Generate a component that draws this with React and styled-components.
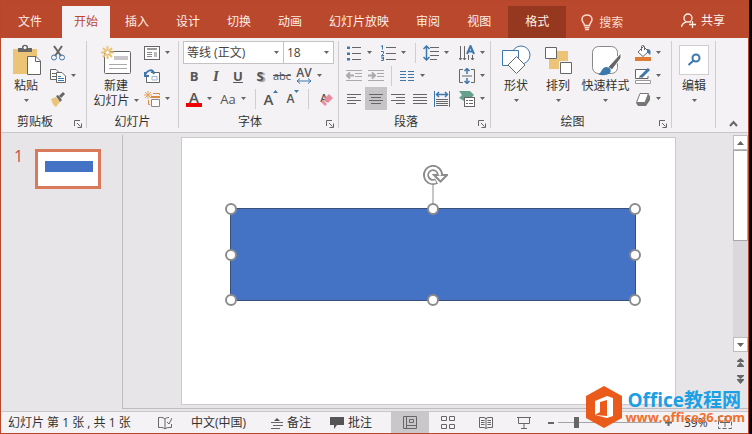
import React, { useState } from 'react';
import styled, { createGlobalStyle } from 'styled-components';

const GlobalStyle = createGlobalStyle`
  * {
    box-sizing: border-box;
  }

  body {
    margin: 0;
    background: #000;
    color: #333;
    font-family: "Open Sans", "Noto Sans CJK SC", sans-serif;
    font-size: 12px;
  }

  button, input, select {
    margin: 0;
    padding: 0;
    border: 0;
    background: none;
    color: inherit;
    font: inherit;
  }

  svg {
    display: block;
    flex: none;
  }
`;

const Window = styled.div`
  display: flex;
  flex-direction: column;
  min-height: 100vh;
  margin-right: 3px;
  border: 1px solid #b7472a;
  background: #e7e5e7;
`;

const TabBar = styled.header`
  display: flex;
  align-items: stretch;
  height: 37px;
  padding-top: 5px;
  background: #b9482d;
  color: #fff;
`;

const TabList = styled.nav`
  display: flex;
  gap: 3px;
`;

const Tab = styled.button`
  padding: 0 12px 2px;
  background: ${props => (props.$active ? '#f4f2f4' : 'transparent')};
  color: ${props => (props.$active ? '#b9482d' : '#fdeee6')};
  white-space: nowrap;
`;

const FileTab = styled(Tab)`
  padding: 0 20px 2px 17px;
`;

const ContextTab = styled(Tab)`
  margin-left: 5px;
  padding: 0 17px 2px;
  background: #963820;
`;

const Search = styled.label`
  display: flex;
  flex: 1;
  align-items: center;
  gap: 6px;
  min-width: 0;
  padding-left: 15px;
  color: #fbdccb;

  input {
    width: 60px;
    outline: 0;
  }

  input::placeholder {
    color: #fbdccb;
    opacity: 1;
  }
`;

const Share = styled.button`
  display: flex;
  align-items: center;
  gap: 5px;
  padding: 0 23px 4px 0;
  color: #fdeee6;
`;

const Ribbon = styled.section`
  display: flex;
  height: 95px;
  padding: 3px 0 4px;
  border-bottom: 1px solid #c9c7c9;
  background: #f4f2f4;
`;

const Group = styled.div`
  display: flex;
  flex: none;
  flex-direction: column;
  width: ${props => props.$width}px;
  border-right: 1px solid #cfcdcf;
`;

const GroupBody = styled.div`
  display: flex;
  height: 69px;
  padding-left: 4px;
`;

const GroupFooter = styled.div`
  display: flex;
  flex: 1;
  align-items: flex-end;
  line-height: 12px;

  span {
    flex: 1;
    text-align: center;
  }
`;

const Launcher = styled.button`
  padding: 0 4px 0 5px;
`;

const Column = styled.div`
  display: flex;
  flex: ${props => (props.$grow ? 1 : 'none')};
  flex-direction: column;
`;

const Row = styled.div`
  display: flex;
  align-items: center;
  height: 23px;
`;

const Tool = styled.button`
  display: flex;
  flex: none;
  flex-direction: column;
  align-items: center;
  justify-content: center;
  width: 22px;
  height: 23px;
  background: ${props => (props.$active ? '#c6c4c6' : 'transparent')};
  color: #555;
`;

const Glyph = styled.span`
  font-size: ${props => props.$size || 13}px;
  font-weight: ${props => props.$weight || 400};
  line-height: ${props => props.$line || 18}px;
`;

const ItalicGlyph = styled(Glyph)`
  font-family: "Liberation Serif", serif;
  font-style: italic;
`;

const UnderlineGlyph = styled(Glyph)`
  text-decoration: underline;
`;

const ShadowGlyph = styled(Glyph)`
  text-shadow: 2px 1px 1px #999;
`;

const StrikeGlyph = styled(Glyph)`
  text-decoration: line-through;
`;

const StepGlyph = styled.span`
  display: flex;
  align-items: flex-start;
`;

const EraserGlyph = styled.span`
  display: grid;
  width: 18px;

  > * {
    grid-area: 1 / 1;
  }

  svg {
    align-self: end;
    justify-self: end;
  }
`;

const ColorBar = styled.span`
  width: 16px;
  height: 4px;
  background: #f00000;
`;

const DropButton = styled.button`
  display: flex;
  flex: none;
  align-items: center;
  width: 12px;
  height: 23px;
  padding-left: 2px;
`;

const Separator = styled.span`
  width: 1px;
  height: 20px;
  margin: 0 4px;
  background: #cfcdcf;
`;

const Spacer = styled.span`
  flex: 1;
`;

const BigButton = styled.button`
  display: flex;
  flex: none;
  flex-direction: column;
  align-items: center;
  width: ${props => props.$width}px;
  line-height: 16px;
  white-space: nowrap;
`;

const BigIcon = styled.span`
  display: flex;
  align-items: center;
  justify-content: center;
  height: 37px;
`;

const BigLine = styled.span`
  display: flex;
  align-items: center;
  gap: 4px;
  height: 15px;
`;

const FindBox = styled.span`
  display: flex;
  align-items: center;
  justify-content: center;
  width: 30px;
  height: 30px;
  border: 1px solid #cfcdcf;
  background: #fff;
`;

const SelectBox = styled.span`
  display: grid;
  align-items: center;
  width: ${props => props.$width}px;
  height: 23px;
  border: 1px solid #c4c2c4;
  border-left-width: ${props => (props.$joined ? 0 : 1)}px;
  background: #fff;

  select, svg {
    grid-area: 1 / 1;
  }

  select {
    appearance: none;
    padding-left: 3px;
    color: #444;
  }

  svg {
    margin-right: 4px;
    justify-self: end;
    pointer-events: none;
  }
`;

const Collapse = styled.button`
  align-self: flex-end;
  margin-left: auto;
  padding: 0 10px 0 0;
`;

const Workspace = styled.main`
  display: flex;
  flex: 1;
  padding-top: 2px;
`;

const Thumbnails = styled.aside`
  display: flex;
  align-items: flex-start;
  width: 122px;
  padding: 14px 0 0 13px;
  border-right: 1px solid #bebcbe;
`;

const ThumbNumber = styled.span`
  width: 21px;
  color: #c6504a;
  font-size: 16px;
  line-height: 14px;
`;

const Thumb = styled.button`
  display: flex;
  width: 66px;
  height: 40px;
  padding: 9px 5px 0 7px;
  border: 3px solid #d97a5b;
  background: #fff;

  span {
    flex: 1;
    height: 11px;
    background: #4472c4;
  }
`;

const Canvas = styled.section`
  display: flex;
  flex: 1;
  justify-content: center;
  padding: 2px 57px 3px 58px;
  border-bottom: 1px solid #bebcbe;
`;

const Slide = styled.div`
  flex: 1;
  padding: 70px 39px 0 48px;
  border: 1px solid #cbc9cb;
  background: #fff;
`;

const SelectedShape = styled.div`
  position: relative;
  height: 93px;
  border: 1px solid #3a5078;
  background: #4472c4;
`;

const Handle = styled.span`
  position: absolute;
  top: ${props => props.$y}%;
  left: ${props => props.$x}%;
  width: 12px;
  height: 12px;
  border: 2px solid #8c8c8c;
  border-radius: 50%;
  background: #fff;
  transform: translate(-50%, -50%);
`;

const RotateHandle = styled.span`
  position: absolute;
  bottom: 100%;
  left: 50%;
  transform: translateX(-50%);
`;

const ScrollBar = styled.div`
  display: flex;
  flex-direction: column;
  width: 15px;
  border-bottom: 1px solid #bebcbe;
`;

const ScrollButton = styled.button`
  display: flex;
  align-items: center;
  justify-content: center;
  height: 15px;
  border: 1px solid #bebcbe;
  background: #fff;
`;

const ScrollTrack = styled.div`
  flex: 1;
  background: #dad8da;
`;

const ScrollThumb = styled.div`
  height: 91px;
  border: 1px solid #a9a7a9;
  background: #fff;
`;

const PageButton = styled.button`
  display: flex;
  align-items: center;
  justify-content: center;
  height: 17px;
`;

const ScrollEnd = styled.div`
  display: flex;
  flex-direction: column;
  height: 56px;
  padding-top: 2px;
`;

const StatusBar = styled.footer`
  position: relative;
  display: flex;
  align-items: center;
  height: 22px;
  margin-top: 2px;
  padding: 0 16px 0 7px;
  border-top: 1px solid #c9c7c9;
  background: #f4f2f4;
  line-height: 16px;
  white-space: nowrap;
`;

const StatusText = styled.span`
  width: 150px;
`;

const StatusButton = styled.button`
  display: flex;
  align-items: center;
  gap: 4px;
  margin-right: 19px;
`;

const ViewButton = styled.button`
  display: flex;
  align-items: center;
  justify-content: center;
  width: 38px;
  height: 21px;
  background: ${props => (props.$active ? '#c9c7c9' : 'transparent')};
`;

const Zoom = styled.div`
  display: flex;
  flex: none;
  align-items: center;
  gap: 4px;
  margin-left: 5px;
`;

const ZoomSlider = styled.input`
  width: 103px;
  height: 13px;
  appearance: none;

  &::-webkit-slider-runnable-track {
    height: 1px;
    background: #a5a3a5;
  }

  &::-webkit-slider-thumb {
    width: 5px;
    height: 11px;
    margin-top: -5px;
    appearance: none;
    background: #666;
  }
`;

const ZoomValue = styled.span`
  width: 38px;
  padding-left: 8px;
`;

const Watermark = styled.div`
  position: absolute;
  right: 3px;
  bottom: 5px;
  display: flex;
  align-items: center;
  gap: 3px;
  pointer-events: none;
`;

const WatermarkText = styled.div`
  color: #f0702c;
  font-size: 13px;
  font-weight: 700;
  line-height: 14px;

  strong {
    display: block;
    padding-left: 2px;
    color: #1ba0e4;
    font-size: 19px;
    font-weight: 700;
    line-height: 20px;
  }
`;

const Svg = ({ w = 16, h = 16, children, ...rest }) => (
  <svg width={w} height={h} viewBox={`0 0 ${w} ${h}`} fill="none" stroke="#666" aria-hidden="true" {...rest}>
    {children}
  </svg>
);

const Caret = () => (
  <Svg w={5} h={3} stroke="none" fill="#666"><path d="M0 0H5L2.5 3Z" /></Svg>
);

const Drop = ({ label }) => (
  <DropButton aria-label={label}><Caret /></DropButton>
);

const Paste = () => (
  <Svg w={30} h={32}>
    <path d="M2 5H26V30H2Z" fill="#ecc477" stroke="none" />
    <path d="M7 8V4H11V3C11 0 17 0 17 3V4H21V8Z" fill="#666" stroke="none" />
    <circle cx="14" cy="3.5" r="1.5" fill="#fff" stroke="none" />
    <path d="M16.5 12.5H25L29.5 17V30.5H16.5Z" fill="#fff" />
    <path d="M24.5 12.5V17.5H29.5" />
  </Svg>
);

const Cut = () => (
  <Svg>
    <path d="M4 1L11 11M12 1L5 11" strokeWidth="2" />
    <circle cx="4" cy="12.5" r="2.5" stroke="#3d78ad" />
    <circle cx="12" cy="12.5" r="2.5" stroke="#3d78ad" />
  </Svg>
);

const Copy = () => (
  <Svg>
    <path d="M.5 1.500H6L8.500 4V11.500H.5ZM2 5.500H6M2 8.500H6" fill="#fff" />
    <path d="M6.500 4.500H12L15.500 8V14.500H6.500Z" fill="#fff" />
    <path d="M8 8.500H11M8 10.500H14M8 12.500H14" stroke="#3d78ad" />
  </Svg>
);

const Brush = () => (
  <Svg>
    <path d="M1 8L6 6L10 11L6 16C4 15 2 12 1 8Z" fill="#ecc477" stroke="none" />
    <path d="M6 5L8 4L12 9L10 11Z" fill="#666" stroke="none" />
    <path d="M10 6L14 2" strokeWidth="3" />
  </Svg>
);

const NewSlide = () => (
  <Svg w={30} h={28}>
    <rect x="3.500" y="5.500" width="26" height="22" rx="1" fill="#fff" />
    <path d="M13 10H27V14H13Z" fill="#c8c6c8" stroke="none" />
    <path d="M8 18.500H26M8 22.500H26" stroke="#aaa" />
    <path d="M6.500 0V13M0 6.500H13M2 2L11 11M11 2L2 11" stroke="#ecc477" strokeWidth="2" />
    <circle cx="6.500" cy="6.500" r="2" fill="#fff" stroke="#ecc477" />
  </Svg>
);

const Layout = () => (
  <Svg>
    <rect x=".5" y="1.500" width="15" height="13" fill="#fff" />
    <path d="M3 4H13" stroke="#999" strokeWidth="2" />
    <path d="M3 7.500H8M3 9.500H8M3 11.500H8" stroke="#888" />
    <path d="M10 7H13V12H10Z" fill="#bbb" stroke="none" />
  </Svg>
);

const Reset = () => (
  <Svg>
    <path d="M7 4.500H15.500V14.500H2.500V9" fill="#fff" />
    <path d="M8 8.500H13V12H8Z" stroke="#9bb5cc" />
    <path d="M1 4V8H5M1 7C4 1 9 1 10 6" stroke="#3d78ad" strokeWidth="2" />
  </Svg>
);

const Section = () => (
  <Svg>
    <path d="M4 0V8M0 4H8M1 1L7 7M7 1L1 7" stroke="#e3a35f" />
    <path d="M9 2.500H15.500V4M6 13.500H4.500V9" stroke="#d88b42" />
    <path d="M7.500 8.500H15.500V15.500H7.500Z" fill="#fff" stroke="#888" />
    <path d="M7 6H16" stroke="#d88b42" strokeWidth="2" />
  </Svg>
);

const SpacingArrow = () => (
  <Svg w={16} h={6} stroke="#3d78ad"><path d="M1 3H15M4 .5L1 3L4 5.500M12 .5L15 3L12 5.500" /></Svg>
);

const SizeGlyph = ({ down }) => (
  <StepGlyph>
    <Glyph $size={down ? 12 : 15} $weight={600}>A</Glyph>
    <Svg w={5} h={3} stroke="none" fill="#3d78ad"><path d={down ? 'M0 0H5L2.500 3Z' : 'M0 3H5L2.500 0Z'} /></Svg>
  </StepGlyph>
);

const ClearFormat = () => (
  <EraserGlyph>
    <Glyph $size={11} $weight={600} $line={12}>A</Glyph>
    <Svg w={13} h={14} stroke="none" fill="#e98ba3">
      <path d="M4 7L9 2L13 6L8 11Z" />
      <path d="M3 8L7 12L5 14L1 10Z" />
    </Svg>
  </EraserGlyph>
);

const Bullets = () => (
  <Svg>
    <path d="M6 2.500H15M6 8.500H15M6 14.500H15" />
    <path d="M1 1.500H4V4H1ZM1 7.500H4V10H1ZM1 13H4V15.500H1Z" fill="#3d78ad" stroke="none" />
  </Svg>
);

const Numbers = () => (
  <Svg>
    <path d="M6 2.500H16M6 8.500H16M6 14.500H16" />
    <path d="M1 1.500L2.500 .5V4.500M1 6.500H3.500V8.500L1.500 10.500H4M1 12H3.500V15.500H1M1.500 13.500H3.500" stroke="#3d78ad" />
  </Svg>
);

const Indent = ({ flip }) => (
  <Svg stroke="#aaa">
    <path d="M0 2.500H16M9 5.500H16M9 8.500H16M0 12.500H16" />
    <path d={flip ? 'M0 7.500H7M4 4.500L7 7.500L4 10.500' : 'M8 7.500H1M4 4.500L1 7.500L4 10.500'} strokeWidth="2" />
  </Svg>
);

const LineSpacing = () => (
  <Svg>
    <path d="M7 2.500H16M7 6.500H16M7 10.500H16M7 14.500H14" />
    <path d="M3.500 1V15M.5 4L3.500 1L6.500 4M.5 12L3.500 15L6.500 12" stroke="#3d78ad" strokeWidth="1.500" />
  </Svg>
);

const TextDirection = () => (
  <Svg>
    <path d="M1.500 1V15M5.500 1V15M9.500 10V15M13.500 10V15M0 13L1.500 15L3 13M4 13L5.500 15L7 13M12 13L13.500 15L15 13" />
    <path d="M8 9L11.500 1L15 9M9 6.500H14" stroke="#3d78ad" strokeWidth="2" />
  </Svg>
);

const Columns = () => (
  <Svg stroke="#3d78ad">
    <path d="M1 3.500H7M1 6.500H7M1 9.500H7M1 12.500H7M9 3.500H15M9 6.500H15M9 9.500H15M9 12.500H15" />
  </Svg>
);

const AlignText = () => (
  <Svg>
    <path d="M4 1.500H.5V14.500H4M12 1.500H15.500V14.500H12M3 8H13" />
    <path d="M8 0V6M5.500 3L8 .5L10.500 3M8 10V16M5.500 13L8 15.500L10.500 13" stroke="#3d78ad" strokeWidth="1.500" />
  </Svg>
);

const alignPaths = {
  left: 'M1 3.500H15M1 6.500H10M1 9.500H15M1 12.500H10',
  center: 'M1 3.500H15M3 6.500H13M1 9.500H15M3 12.500H13',
  right: 'M1 3.500H15M6 6.500H15M1 9.500H15M6 12.500H15',
  justify: 'M1 3.500H15M1 6.500H15M1 9.500H15M1 12.500H15',
};

const Align = ({ kind }) => <Svg><path d={alignPaths[kind]} /></Svg>;

const Distribute = () => (
  <Svg>
    <path d="M.5 0V16M15.500 0V16" stroke="#3d78ad" />
    <path d="M3 3.500H13M5 1L2.500 3.500L5 6M11 1L13.500 3.500L11 6" stroke="#3d78ad" strokeWidth="1.500" />
    <path d="M2 8.500H14M2 10.500H14M2 12.500H14M2 14.500H14" />
  </Svg>
);

const SmartArt = () => (
  <Svg>
    <path d="M0 0H11L15 4L12 7H5V10L0 7L3 4Z" fill="#64a08a" stroke="none" />
    <rect x="5.500" y="6.500" width="10" height="9" fill="#fff" />
    <path d="M7 9.500H9M10 9.500H14M7 12.500H9M10 12.500H14" />
  </Svg>
);

const Shapes = () => (
  <Svg w={30} h={30} stroke="#3d78ad">
    <circle cx="20" cy="10" r="9" fill="#fff" />
    <path d="M1.500 5.500H17.500V20.500H1.500Z" fill="#fff" strokeWidth="1" />
    <path d="M15.500 11.500L24 20L15.500 28.500L7 20Z" fill="#fff" stroke="#666" />
  </Svg>
);

const Arrange = () => (
  <Svg w={28} h={28}>
    <path d="M13 5H24V15H13ZM5 13H15V23H5Z" fill="#ecc477" stroke="none" />
    <path d="M1.500 1.500H12.500V12.500H1.500ZM16.500 16.500H27.500V27.500H16.500Z" fill="#fff" />
  </Svg>
);

const QuickStyle = () => (
  <Svg w={32} h={32}>
    <rect x="2.500" y="2.500" width="25" height="27" rx="6" fill="#fff" stroke="#888" />
    <path d="M31 9V14L22 26L18 23Z" fill="#666" stroke="#fff" />
    <path d="M8 31C11 30 11 24 16 23C20 23 22 26 20 29C17 32 12 31 8 31Z" fill="#3d78ad" stroke="none" />
  </Svg>
);

const Fill = () => (
  <Svg>
    <path d="M3 7L8.500 1.500L13.500 6.500L8 11.500Z" fill="#fff" />
    <path d="M6.500 6V1.500C6.500 0 9.500 0 9.500 2V5" />
    <path d="M12 4C16 4 16 7 15 10L12 7Z" fill="#3d78ad" stroke="none" />
    <path d="M0 12H16V16H0Z" fill="#e07b36" stroke="none" />
  </Svg>
);

const Outline = () => (
  <Svg>
    <path d="M12 1.500H.5V10.500H13V8" fill="#fff" />
    <path d="M6 9L14 1" stroke="#3d78ad" strokeWidth="3" />
    <path d="M4 10L5 7L7 9Z" fill="#666" stroke="none" />
    <path d="M.5 12.500H15.500V15.500H.5Z" fill="#fff" stroke="#999" />
  </Svg>
);

const Effects = () => (
  <Svg>
    <path d="M1 12L3 15H11L15 9V5L13 3Z" fill="#777" stroke="none" />
    <path d="M5 2.500H13.500L10 11.500H1.500Z" fill="#fff" stroke="#777" strokeLinejoin="round" />
  </Svg>
);

const FindIcon = () => (
  <Svg w={14} h={14} stroke="#3d78ad">
    <circle cx="9" cy="5" r="3.500" strokeWidth="2" />
    <path d="M6.500 7.500L1.500 12" strokeWidth="2" />
  </Svg>
);

const LauncherIcon = () => (
  <Svg w={8} h={8}>
    <path d="M.5 6V.5H6M3 3L6.500 6.500M7.500 3.500V7.500H3.500" />
  </Svg>
);

const Bulb = () => (
  <Svg w={12} h={17} stroke="#fbdccb" strokeWidth="1.500">
    <path d="M3.500 11.500C3.500 9 1 8.500 1 5.500C1 -.5 11 -.5 11 5.500C11 8.500 8.500 9 8.500 11.500Z" />
    <path d="M3.500 13.500H8.500M4 15.500H8" />
  </Svg>
);

const Person = () => (
  <Svg w={15} h={15} stroke="#fdeee6" strokeWidth="1.300">
    <circle cx="7" cy="5" r="4" />
    <path d="M.5 14C1 11 3 9.500 5.500 9M8.500 9L10 9.500M8 11.500H15M11.500 8V15" />
  </Svg>
);

const PageArrows = ({ down }) => (
  <Svg w={7} h={9} stroke="none" fill="#666">
    <path d={down ? 'M0 0H7V1L3.500 4L0 1ZM0 4H7V5L3.500 9L0 5Z' : 'M0 4H7V3L3.500 0L0 3ZM0 9H7V8L3.500 4L0 8Z'} />
  </Svg>
);

const Rotate = () => (
  <Svg w={30} h={44} stroke="#8c8c8c">
    <path d="M15 19V44" />
    <path d="M18.500 16A7 7 0 1 1 22 9.500" strokeWidth="6" />
    <path d="M16 10H29L22.500 16.500Z" fill="#fff" strokeWidth="2" />
    <path d="M17.700 16.500A7 7 0 1 1 22 10.500" stroke="#fff" strokeWidth="2.500" />
    <path d="M19 11H26L22.500 14.500Z" fill="#fff" stroke="none" />
  </Svg>
);

const OfficeLogo = () => (
  <Svg w={36} h={42} stroke="none">
    <path d="M18 0L36 10V32L18 42L0 32V10Z" fill="#ea5b1b" />
    <path d="M9 15L21 10L27 12V30L21 32L9 29L21 30V14L14 16V26L9 29Z" fill="#fff" />
  </Svg>
);

const RibbonGroup = ({ title, width, launcher, children }) => (
  <Group $width={width}>
    <GroupBody>{children}</GroupBody>
    <GroupFooter>
      <span>{title}</span>
      {launcher && <Launcher aria-label={title}><LauncherIcon /></Launcher>}
    </GroupFooter>
  </Group>
);

const Big = ({ icon, text, width }) => (
  <BigButton $width={width}>
    <BigIcon>{icon}</BigIcon>
    <BigLine>{text}</BigLine>
    <BigLine><Caret /></BigLine>
  </BigButton>
);

const tabs = ['开始', '插入', '设计', '切换', '动画', '幻灯片放映', '审阅', '视图'];

const handles = [
  [0, 0], [50, 0], [100, 0],
  [0, 50], [100, 50],
  [0, 100], [50, 100], [100, 100],
];

const App = () => {
  const [activeTab, setActiveTab] = useState('开始');
  const [zoom, setZoom] = useState(39);

  return (
    <>
      <GlobalStyle />
      <Window>
        <TabBar>
          <FileTab>文件</FileTab>
          <TabList>
            {tabs.map(tab => (
              <Tab key={tab} $active={tab === activeTab} onClick={() => setActiveTab(tab)}>{tab}</Tab>
            ))}
          </TabList>
          <ContextTab>格式</ContextTab>
          <Search>
            <Bulb />
            <input type="text" placeholder="搜索" aria-label="搜索" />
          </Search>
          <Share><Person />共享</Share>
        </TabBar>

        <Ribbon>
          <RibbonGroup title="剪贴板" width={86} launcher>
            <Big icon={<Paste />} text="粘贴" width={42} />
            <Column>
              <Row><Tool aria-label="剪切"><Cut /></Tool></Row>
              <Row><Tool aria-label="复制"><Copy /></Tool><Drop label="复制选项" /></Row>
              <Row><Tool aria-label="格式刷"><Brush /></Tool></Row>
            </Column>
          </RibbonGroup>

          <RibbonGroup title="幻灯片" width={92}>
            <BigButton $width={50}>
              <BigIcon><NewSlide /></BigIcon>
              <BigLine>新建</BigLine>
              <BigLine>幻灯片<Caret /></BigLine>
            </BigButton>
            <Column>
              <Row><Tool aria-label="版式"><Layout /></Tool><Drop label="版式选项" /></Row>
              <Row><Tool aria-label="重置"><Reset /></Tool></Row>
              <Row><Tool aria-label="节"><Section /></Tool><Drop label="节选项" /></Row>
            </Column>
          </RibbonGroup>

          <RibbonGroup title="字体" width={160} launcher>
            <Column $grow>
              <Row>
                <SelectBox $width={101}>
                  <select aria-label="字体"><option>等线 (正文)</option></select>
                  <Caret />
                </SelectBox>
                <SelectBox $width={50} $joined>
                  <select aria-label="字号"><option>18</option></select>
                  <Caret />
                </SelectBox>
              </Row>
              <Row>
                <Tool><Glyph $weight={700}>B</Glyph></Tool>
                <Tool><ItalicGlyph $weight={700} $size={15}>I</ItalicGlyph></Tool>
                <Tool><UnderlineGlyph $weight={700}>U</UnderlineGlyph></Tool>
                <Tool><ShadowGlyph $weight={700}>S</ShadowGlyph></Tool>
                <Tool><StrikeGlyph $size={11}>abc</StrikeGlyph></Tool>
                <Tool><Glyph $size={12} $weight={600} $line={10}>AV</Glyph><SpacingArrow /></Tool>
                <Drop label="字符间距" />
              </Row>
              <Row>
                <Tool><Glyph $size={15} $weight={600} $line={12}>A</Glyph><ColorBar /></Tool>
                <Drop label="字体颜色" />
                <Tool><Glyph>Aa</Glyph></Tool>
                <Drop label="更改大小写" />
                <Separator />
                <Tool aria-label="增大字号"><SizeGlyph /></Tool>
                <Tool aria-label="减小字号"><SizeGlyph down /></Tool>
                <Separator />
                <Tool aria-label="清除格式"><ClearFormat /></Tool>
              </Row>
            </Column>
          </RibbonGroup>

          <RibbonGroup title="段落" width={152} launcher>
            <Column $grow>
              <Row>
                <Tool aria-label="项目符号"><Bullets /></Tool><Drop label="项目符号选项" />
                <Tool aria-label="编号"><Numbers /></Tool><Drop label="编号选项" />
                <Separator />
                <Tool aria-label="行距"><LineSpacing /></Tool><Drop label="行距选项" />
                <Spacer />
                <Tool aria-label="文字方向"><TextDirection /></Tool><Drop label="文字方向选项" />
              </Row>
              <Row>
                <Tool aria-label="减少缩进"><Indent /></Tool>
                <Tool aria-label="增加缩进"><Indent flip /></Tool>
                <Separator />
                <Tool aria-label="分栏"><Columns /></Tool><Drop label="分栏选项" />
                <Spacer />
                <Tool aria-label="对齐文本"><AlignText /></Tool><Drop label="对齐文本选项" />
              </Row>
              <Row>
                <Tool aria-label="左对齐"><Align kind="left" /></Tool>
                <Tool aria-label="居中" $active><Align kind="center" /></Tool>
                <Tool aria-label="右对齐"><Align kind="right" /></Tool>
                <Tool aria-label="两端对齐"><Align kind="justify" /></Tool>
                <Tool aria-label="分散对齐"><Distribute /></Tool>
                <Spacer />
                <Tool aria-label="SmartArt"><SmartArt /></Tool><Drop label="SmartArt 选项" />
              </Row>
            </Column>
          </RibbonGroup>

          <RibbonGroup title="绘图" width={181} launcher>
            <Big icon={<Shapes />} text="形状" width={42} />
            <Big icon={<Arrange />} text="排列" width={42} />
            <Big icon={<QuickStyle />} text="快速样式" width={53} />
            <Column>
              <Row><Tool aria-label="形状填充"><Fill /></Tool><Drop label="填充选项" /></Row>
              <Row><Tool aria-label="形状轮廓"><Outline /></Tool><Drop label="轮廓选项" /></Row>
              <Row><Tool aria-label="形状效果"><Effects /></Tool><Drop label="效果选项" /></Row>
            </Column>
          </RibbonGroup>

          <RibbonGroup width={44}>
            <Big icon={<FindBox><FindIcon /></FindBox>} text="编辑" width={36} />
          </RibbonGroup>

          <Collapse aria-label="折叠功能区">
            <Svg w={9} h={8}><path d="M1 6L4.500 2L8 6" strokeWidth="2" /></Svg>
          </Collapse>
        </Ribbon>

        <Workspace>
          <Thumbnails>
            <ThumbNumber>1</ThumbNumber>
            <Thumb aria-label="幻灯片 1"><span /></Thumb>
          </Thumbnails>
          <Canvas>
            <Slide>
              <SelectedShape>
                <RotateHandle><Rotate /></RotateHandle>
                {handles.map(([x, y]) => <Handle key={`${x}-${y}`} $x={x} $y={y} />)}
              </SelectedShape>
            </Slide>
          </Canvas>
          <ScrollBar>
            <ScrollButton aria-label="向上">
              <Svg w={7} h={4} stroke="none" fill="#666"><path d="M0 4L3.500 0L7 4Z" /></Svg>
            </ScrollButton>
            <ScrollTrack><ScrollThumb /></ScrollTrack>
            <ScrollButton aria-label="向下">
              <Svg w={7} h={4} stroke="none" fill="#666"><path d="M0 0H7L3.500 4Z" /></Svg>
            </ScrollButton>
            <ScrollEnd>
              <PageButton aria-label="上一张"><PageArrows /></PageButton>
              <PageButton aria-label="下一张"><PageArrows down /></PageButton>
            </ScrollEnd>
          </ScrollBar>
        </Workspace>

        <StatusBar>
          <StatusText>幻灯片 第 1 张 , 共 1 张</StatusText>
          <StatusButton aria-label="拼写检查">
            <Svg w={14} h={14}>
              <path d="M7 3C5 1 3 1.500 .5 1.500V11.500C3 11.500 5 11 7 13V3C8 2 9 1.500 11 1.500M7 13C8 11.500 10 11.500 13.500 11.500V8M9 6L11 8L14 2" />
            </Svg>
          </StatusButton>
          <StatusButton>中文(中国)</StatusButton>
          <Spacer />
          <StatusButton>
            <Svg w={12} h={12}>
              <path d="M3 4L6 1L9 4Z" fill="#555" stroke="none" />
              <path d="M0 5.500H12M2 8.500H12M0 11.500H9" />
            </Svg>
            备注
          </StatusButton>
          <StatusButton>
            <Svg w={14} h={13} fill="#555" stroke="none"><path d="M0 1H14V9H7L4 13V9H0Z" /></Svg>
            批注
          </StatusButton>
          <ViewButton $active aria-label="普通视图">
            <Svg w={14} h={13}><path d="M.5 .5H13.500V12.500H.5ZM3.500 .5V12.500M6.500 3.500H10.500V6.500H6.500ZM3.500 9.500H13.500" /></Svg>
          </ViewButton>
          <ViewButton aria-label="幻灯片浏览">
            <Svg w={14} h={13}><path d="M.5 .5H5.500V4.500H.5ZM8.500 .5H13.500V4.500H8.500ZM.5 8.500H5.500V12.500H.5ZM8.500 8.500H13.500V12.500H8.500Z" /></Svg>
          </ViewButton>
          <ViewButton aria-label="阅读视图">
            <Svg w={14} h={13}><path d="M.5 1.500H5L7 2.500L9 1.500H13.500V11.500H9L7 12.500L5 11.500H.5ZM7 2V12M2 4.500H5.500M2 6.500H5.500M2 8.500H5.500M8.500 4.500H12M8.500 6.500H12M8.500 8.500H12" /></Svg>
          </ViewButton>
          <ViewButton aria-label="幻灯片放映">
            <Svg w={14} h={13}><path d="M0 1.500H14M1.500 1.500V7.500H12.500V1.500M7 8V12M4 12.500H10" /></Svg>
          </ViewButton>
          <Zoom>
            <button aria-label="缩小"><Svg w={6} h={6}><path d="M0 3H6" strokeWidth="2" /></Svg></button>
            <ZoomSlider type="range" min="10" max="190" value={zoom} aria-label="显示比例" onChange={e => setZoom(Number(e.target.value))} />
            <button aria-label="放大"><Svg w={7} h={7}><path d="M0 3.500H7M3.500 0V7" strokeWidth="2" /></Svg></button>
            <ZoomValue>{zoom}%</ZoomValue>
            <button aria-label="适应窗口">
              <Svg w={14} h={13}><path d="M.5 .5H13.500V12.500H.5Z" strokeDasharray="4 2" /><path d="M7 2V11M2 6.500H12" /></Svg>
            </button>
          </Zoom>
          <Watermark>
            <OfficeLogo />
            <WatermarkText>
              <strong>Office教程网</strong>
              www.office26.com
            </WatermarkText>
          </Watermark>
        </StatusBar>
      </Window>
    </>
  );
};

export default App;
